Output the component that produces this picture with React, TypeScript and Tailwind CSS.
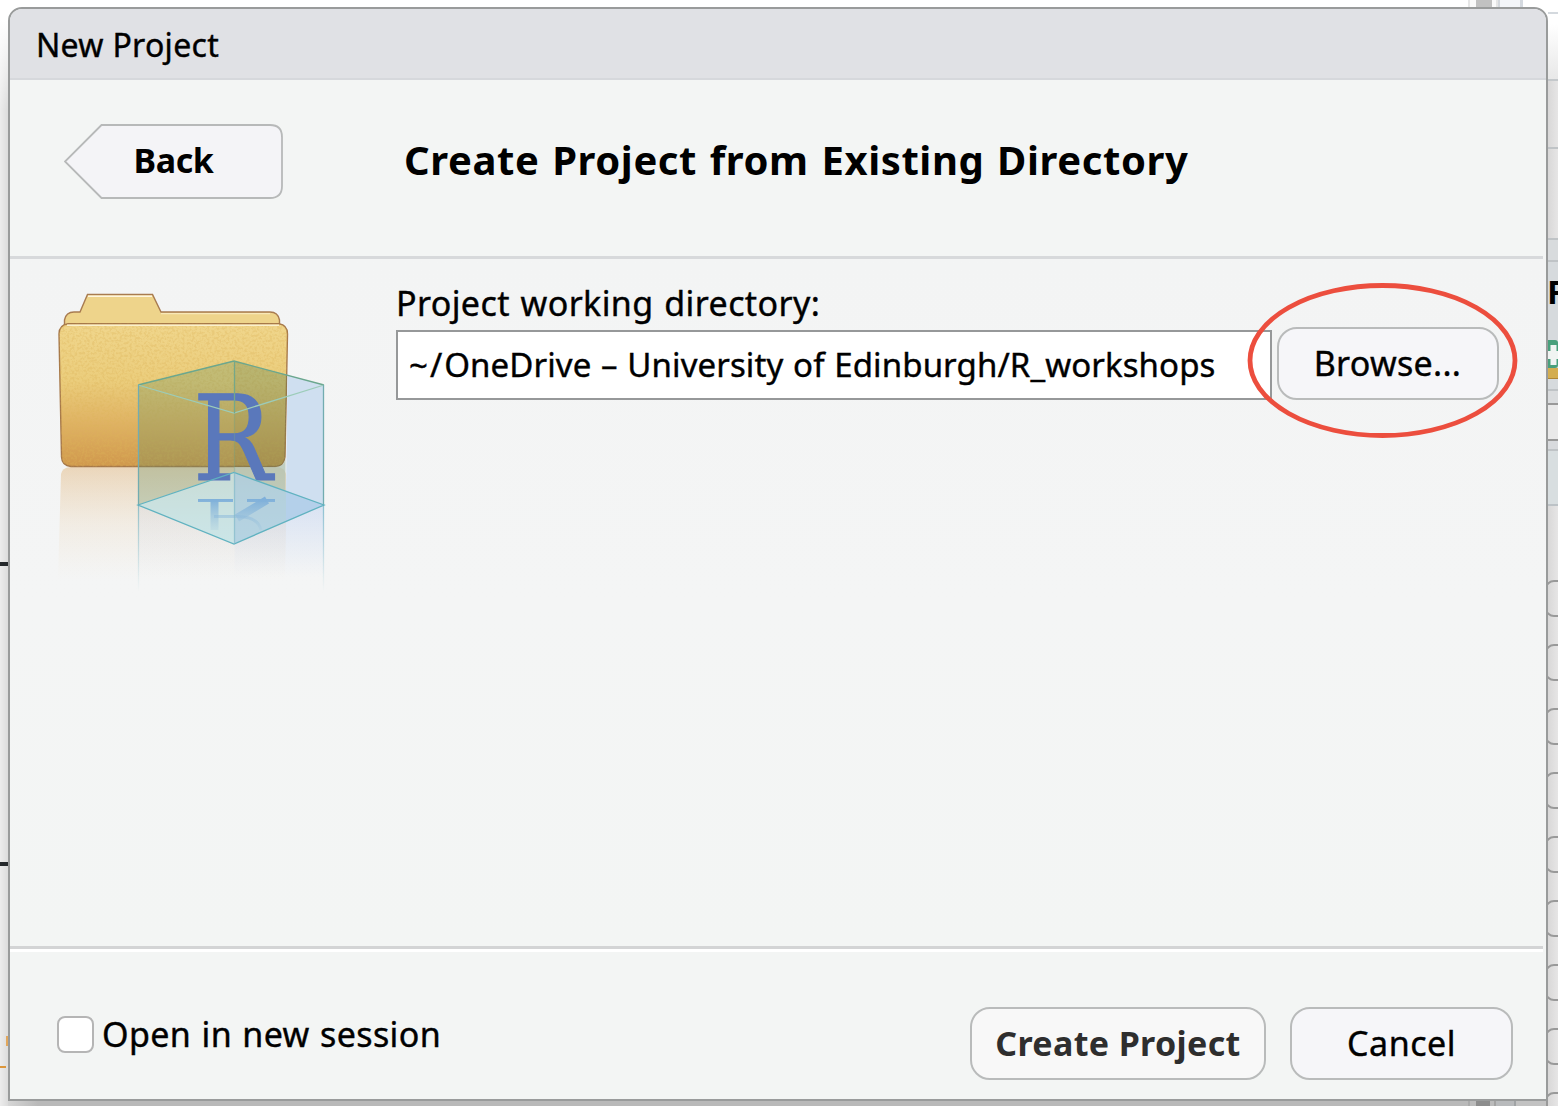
import React from "react";

const SERIES = [0, 1, 2, 3, 4, 5, 6, 7, 8];

function TopStrip() {
  return (
    <div className="flex h-[7px] shrink-0 bg-white">
      <div className="ml-[1460px] h-full w-[2px] bg-[#e6e6e6]" />
      <div className="h-full w-[6px] bg-[#fafafa]" />
      <div className="h-full w-[16px] bg-[#c1c1c1]" />
      <div className="h-full w-[4px] bg-[#fafafa]" />
      <div className="h-full w-[2px] bg-[#e6e6e6]" />
      <div className="h-full w-[2px] bg-[#d4d8dd]" />
      <div className="h-full w-[20px] bg-[#f4f6f9]" />
      <div className="h-full w-[3px] bg-[#d4d9df]" />
    </div>
  );
}

function BottomStrip() {
  return (
    <div className="flex h-[5px] shrink-0 bg-[linear-gradient(90deg,#d6d6d6,#b9b9b9_30px)]">
      <div className="ml-[1460px] h-full w-[2px] bg-[#aaaaaa]" />
      <div className="h-full w-[6px] bg-[#bbbbbb]" />
      <div className="h-full w-[14px] bg-[#8d8d8d]" />
      <div className="h-full w-[4px] bg-[#bbbbbb]" />
      <div className="h-full w-[2px] bg-[#a3a3a3]" />
      <div className="h-full w-[18px] bg-[#b8babc]" />
      <div className="h-full w-[2px] bg-[#a0a3a5]" />
      <div className="h-full flex-1 bg-[#c2c2c2]" />
      <div className="h-full w-[2px] bg-[#999999]" />
    </div>
  );
}

function LeftStrip() {
  return (
    <div className="flex h-full w-2 shrink-0 flex-col overflow-hidden bg-[linear-gradient(180deg,#ffffff_20px,#ffffff00_110px),linear-gradient(90deg,#ececec,#dcdcdc)]">
      <div className="mt-[562px] h-1 bg-[#25292c]" />
      <div className="mt-[296px] h-1 bg-[#25292c]" />
      <div className="mt-[170px] ml-[6px] h-[10px] w-[2px] bg-[#e2a75c]" />
      <div className="mt-[20px] h-[2px] w-[6px] bg-[#dc963b]" />
    </div>
  );
}

function RightStrip() {
  return (
    <div className="flex h-full w-[10px] shrink-0 flex-col overflow-hidden bg-[linear-gradient(90deg,#d9d8d8,#e6e5e5)]">
      <div className="h-3 shrink-0 bg-white" />
      <div className="h-[2px] shrink-0 bg-[#d4d9de]" />
      <div className="h-[65px] shrink-0 bg-[linear-gradient(180deg,#ffffff_10px,#e8e8e8)]" />
      <div className="h-[2px] shrink-0 bg-[#c4c8cb]" />
      <div className="h-[66px] shrink-0" />
      <div className="h-[2px] shrink-0 bg-[#bfc3c6]" />
      <div className="h-[89px] shrink-0" />
      <div className="h-[2px] shrink-0 bg-[#bfc3c6]" />
      <div className="h-5 shrink-0 bg-[#d8dbdd]" />
      <div className="h-[2px] shrink-0 bg-[#bfc3c6]" />
      <div className="h-[78px] shrink-0 bg-[#d6dadd] pt-[12px] font-['Noto_Sans'] text-[33px] leading-[36px] font-bold text-black">
        <span className="-ml-[1px]">F</span>
      </div>
      <svg className="h-[39px] w-[10px] shrink-0 bg-[#d6dadd]" viewBox="0 0 10 39">
        <rect x="-20" y="0" width="30" height="28" rx="3" fill="#48a07c" />
        <path d="M2.500 5h6v6h5v8h-5v6h-6v-6h-6v-8h6z" fill="#f0f4f2" />
        <rect x="0" y="28" width="12" height="11" fill="#d3ad50" />
        <path d="M0 38.5h10" stroke="#ae8637" />
      </svg>
      <div className="h-[10px] shrink-0 bg-[#d6dadd]" />
      <div className="h-[2px] shrink-0 bg-[#bfc3c6]" />
      <div className="h-3 shrink-0 bg-[#dadcde]" />
      <div className="h-[2px] shrink-0 bg-[#999999]" />
      <div className="h-[34px] shrink-0 bg-[#e9e9e9]" />
      <div className="h-[2px] shrink-0 bg-[#999999]" />
      <div className="h-2 shrink-0 bg-[#d8dadd]" />
      <div className="h-[2px] shrink-0 bg-[#bfc3c6]" />
      <div className="h-[53px] shrink-0 bg-[#d8dee0]" />
      <div className="h-[2px] shrink-0 bg-[#bcc2c6]" />
      <div className="h-[74px] shrink-0" />
      {SERIES.map((n) => (
        <div key={n} className="-ml-[3px] mb-[27px] h-[37px] w-[30px] shrink-0 rounded-[9px] border-2 border-[#999999]" />
      ))}
    </div>
  );
}

function ProjectIcon() {
  return (
    <svg className="ml-[30px] h-[320px] w-[300px] shrink-0" viewBox="40 280 300 320">
      <defs>
        <linearGradient id="folder" x1="0" y1="0" x2="0" y2="1">
          <stop offset="0" stopColor="#f0d68c" />
          <stop offset="0.4" stopColor="#ebcd7c" />
          <stop offset="0.7" stopColor="#dfb263" />
          <stop offset="1" stopColor="#d0984c" />
        </linearGradient>
        <linearGradient id="folderReflect" x1="0" y1="0" x2="0" y2="1">
          <stop offset="0" stopColor="#dca45b" stopOpacity="0.38" />
          <stop offset="0.5" stopColor="#e6bd85" stopOpacity="0.16" />
          <stop offset="1" stopColor="#e9cda3" stopOpacity="0" />
        </linearGradient>
        <linearGradient id="cubeReflect" x1="0" y1="0" x2="0" y2="1">
          <stop offset="0" stopColor="#a9c2f0" stopOpacity="0.5" />
          <stop offset="0.8" stopColor="#a9c2f0" stopOpacity="0" />
        </linearGradient>
        <linearGradient id="edgeFade" gradientUnits="userSpaceOnUse" x1="0" y1="505" x2="0" y2="592">
          <stop offset="0" stopColor="#5aa9ba" stopOpacity="0.6" />
          <stop offset="1" stopColor="#5aa9ba" stopOpacity="0" />
        </linearGradient>
        <linearGradient id="mirrorFade" gradientUnits="userSpaceOnUse" x1="0" y1="499" x2="0" y2="532">
          <stop offset="0" stopColor="#7fb0da" />
          <stop offset="1" stopColor="#9cc4dc" stopOpacity="0.15" />
        </linearGradient>
        <filter id="grain" x="0" y="0" width="1" height="1">
          <feTurbulence type="fractalNoise" baseFrequency="0.4" numOctaves="2" seed="4" />
          <feColorMatrix values="0 0 0 0 0.72  0 0 0 0 0.46  0 0 0 0 0.1  0 4 0 0 -1.7" />
          <feComposite in2="SourceGraphic" operator="in" />
        </filter>
      </defs>

      <path d="M61 474Q62 468 70 467H277Q285 468 286 474V530l-1 50H58z" fill="url(#folderReflect)" />
      <path d="M64.500 325 V320 Q66 312 74 312 H80 L87.500 294.500 H152.500 L161 312 H270 Q278 312 279.500 320 V325z" fill="#eed48b" stroke="#a87b50" strokeWidth="1.400" />
      <path d="M88 296.300H152" stroke="#fff5df" strokeWidth="1.500" />
      <path d="M161 313.700H270" stroke="#f8e8b8" strokeWidth="1.200" />
      <path d="M68 323.700H279Q287.500 325 287.500 334L285 457Q284 466.500 275 466.500H71Q62 466 61.500 457L59 334Q59 325 68 323.700z" fill="url(#folder)" stroke="#a67849" strokeWidth="1.400" />
      <path d="M68 323.700H279Q287.500 325 287.500 334L285 457Q284 466.500 275 466.500H71Q62 466 61.500 457L59 334Q59 325 68 323.700z" fill="#000" filter="url(#grain)" opacity="0.32" />
      <path d="M67 325.300H279" stroke="#fbf0cd" strokeWidth="1.500" />

      <path d="M138 505L234.500 544V595H138z" fill="url(#cubeReflect)" opacity="0.3" />
      <path d="M234.500 544L324 505V595H234.500z" fill="url(#cubeReflect)" opacity="0.7" />
      <path d="M138 385L234 361V472L138 505z" fill="#5e8d62" fillOpacity="0.29" />
      <path d="M234 361L287 375L285 457Q284 467 275 467H234z" fill="#4f7d50" fillOpacity="0.32" />
      <path d="M287.500 375L324 385V505L286 491z" fill="#cfdff0" />
      <path d="M234 467H275Q284 467 285.500 458V491L234 472z" fill="#a9bfae" fillOpacity="0.7" />
      <path d="M138 505L234 472L324 505L234 544z" fill="#b0dee4" fillOpacity="0.6" />
      <path d="M234 472L324 505L234 544z" fill="#93b9dc" fillOpacity="0.4" />
      <path d="M286 491L324 505L286 521z" fill="#b4ccf0" fillOpacity="0.5" />

      <text x="193" y="479.500" textLength="79" lengthAdjust="spacingAndGlyphs" fontFamily="DejaVu Serif" fontSize="118.500" fill="#5a78bb" stroke="#5a78bb" strokeWidth="1.200">
        R
      </text>
      <g fill="none" stroke="url(#mirrorFade)">
        <path d="M198 500.500H233M247 500.500H275" strokeWidth="3" />
        <path d="M214.500 500V530" strokeWidth="8" />
        <path d="M267 500L237 518" strokeWidth="8" />
        <path d="M214 516.500H238Q258 517 261 530" strokeWidth="3" />
      </g>
      <g fill="none" strokeWidth="1.300">
        <path d="M138 385L234 361L324 385" stroke="#6ba78e" />
        <path d="M138 385L234 413L324 385" stroke="#9cccb9" />
        <path d="M138.500 385V505M323.500 385V505" stroke="#72acb0" />
        <path d="M234.500 361V413" stroke="#75a789" />
        <path d="M234.500 413V472" stroke="#75a789" strokeOpacity="0.35" />
        <path d="M138 505L234 472.500L324 505L234 544z" stroke="#60b2c0" />
        <path d="M234.500 472V544" stroke="#7fb9c6" strokeOpacity="0.6" />
        <path d="M138.500 505V592M323.500 505V592" stroke="url(#edgeFade)" />
      </g>
    </svg>
  );
}

export default function App() {
  return (
    <div className="flex h-[1106px] w-[1558px] overflow-hidden bg-white font-['Noto_Sans',sans-serif] text-black">
      <LeftStrip />
      <div className="flex w-[1540px] shrink-0 flex-col">
        <TopStrip />
        <div className="flex h-[1094px] flex-col overflow-hidden rounded-t-[14px] border-2 border-[#999b9b] bg-[#f3f5f4]">
          <header className="flex h-[71px] shrink-0 items-center border-b-2 border-[#d6d8dc] bg-[#e0e1e5] pt-[3px] pl-[26px]">
            <h1 className="text-[32px] leading-none tracking-[0.3px] whitespace-nowrap [-webkit-text-stroke:0.4px_black]">New Project</h1>
          </header>

          <section className="flex h-[176px] shrink-0 items-start">
            <button className="relative mt-[44px] ml-[54px] flex h-[75px] w-[219px] shrink-0 items-center justify-center">
              <svg className="absolute inset-0" width="219" height="75" viewBox="0 0 219 75">
                <path d="M37.500 1H206Q218 1 218 13V62Q218 74 206 74H37.500L1 37.500z" fill="#f4f4f7" stroke="#b7b9b9" strokeWidth="1.800" />
              </svg>
              <span className="relative pb-[3px] text-[34px] leading-none font-bold tracking-[-0.4px]">Back</span>
            </button>
            <h2 className="mt-[60px] ml-[121px] text-[40px] leading-[40px] font-bold tracking-[0.6px] whitespace-nowrap [word-spacing:1.7px]">
              Create Project from Existing Directory
            </h2>
          </section>
          <div className="mr-[3px] h-[3px] shrink-0 bg-[#d7d9db]" />

          <main className="flex h-[687px] shrink-0 bg-[linear-gradient(180deg,#f3f4f4,#f4f5f5_50%,#f3f5f4)] pt-[21px]">
            <ProjectIcon />
            <div className="ml-[56px] flex flex-col pt-[3px] [-webkit-text-stroke:0.4px_black]">
              <label className="h-[47px] text-[34px] leading-[41px] tracking-[0.4px] whitespace-nowrap [word-spacing:1.5px]">
                Project working directory:
              </label>
              <div className="flex">
                <div className="flex h-[70px] w-[876px] items-center overflow-hidden border-2 border-[#969899] bg-white pl-[11px] text-[33px] whitespace-nowrap [word-spacing:1px]">
                  <span className="tracking-[2px]">~/</span>
                  <span className="tracking-[0.1px]">OneDrive – University of Edinburgh/R_workshops</span>
                </div>
                <div className="relative -mt-[3px] ml-[5px]">
                  <button className="flex h-[73px] w-[222px] items-center justify-center rounded-[20px] border-2 border-[#b9bbbb] bg-[#f6f6f9] pr-[1px] text-[34px] tracking-[0.3px]">
                    Browse...
                  </button>
                  <svg className="absolute -top-[46px] -left-[32px] max-w-none" width="276" height="160" viewBox="0 0 276 160">
                    <ellipse cx="137.500" cy="79.500" rx="132.500" ry="75" fill="none" stroke="#ec4e3e" strokeWidth="4.800" />
                  </svg>
                </div>
              </div>
            </div>
          </main>

          <div className="mr-[3px] h-[3px] shrink-0 bg-[#d3d4d5]" />
          <div className="mr-[3px] h-[3px] shrink-0 bg-white" />
          <footer className="flex flex-1 items-start">
            <div className="mt-[64px] ml-[47px] flex items-center">
              <div className="h-[37px] w-[37px] rounded-[8px] border-2 border-[#b5b5b5] bg-white" />
              <span className="ml-[8px] text-[34px] leading-[37px] tracking-[0.4px] whitespace-nowrap [-webkit-text-stroke:0.4px_black] [word-spacing:1px]">
                Open in new session
              </span>
            </div>
            <div className="mt-[55px] mr-[33px] ml-auto flex gap-6">
              <button className="flex h-[73px] w-[296px] items-center justify-center rounded-[20px] border-2 border-[#b9bbbb] bg-[#f8f8f8] text-[34px] font-bold tracking-[0.35px] text-[#2e2e2e]">
                Create Project
              </button>
              <button className="flex h-[73px] w-[223px] items-center justify-center rounded-[20px] border-2 border-[#b9bbbb] bg-[#f6f6f9] text-[34px] tracking-[0.5px] [-webkit-text-stroke:0.4px_black]">
                Cancel
              </button>
            </div>
          </footer>
        </div>
        <BottomStrip />
      </div>
      <RightStrip />
    </div>
  );
}
